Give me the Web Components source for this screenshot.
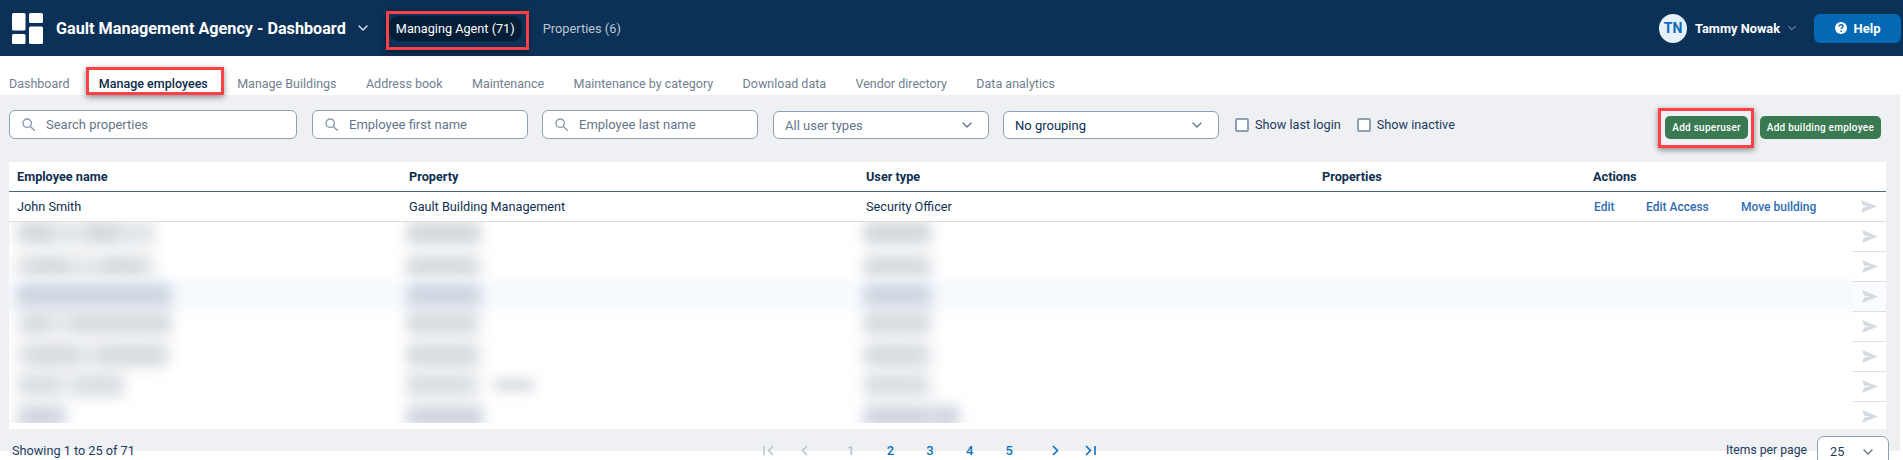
<!DOCTYPE html>
<html lang="en">
<head>
<meta charset="utf-8">
<title>Manage employees</title>
<style>
  html, body { margin: 0; padding: 0; background: #fff; }
  body { width: 1903px; height: 460px; overflow: hidden; font-family: Roboto, "Liberation Sans", sans-serif; font-size: 14px; color: #0b2f52; }
</style>
</head>
<body>
<app-header></app-header>
<nav-tabs></nav-tabs>
<main-panel>
  <filter-bar></filter-bar>
  <employee-table></employee-table>
</main-panel>
<table-footer></table-footer>

<script>
const chevron = (size, color, width) => `<svg width="${size}" height="${size}" viewBox="0 0 12 12" fill="none" stroke="${color}" stroke-width="${width}" stroke-linecap="round" stroke-linejoin="round"><path d="M2 4l4 4 4-4"/></svg>`;

// annotation frame that sits over its slotted content
class RedMark extends HTMLElement {
    connectedCallback() {
        this.attachShadow({ mode: 'open' });
        this.shadowRoot.innerHTML = `
            <style>
                :host { display: block; position: relative; }
                .frame {
                    position: absolute;
                    top: var(--t); right: var(--r); bottom: var(--b); left: var(--l);
                    border: 3px solid #fb4146;
                    box-shadow: 0 2px 6px rgba(0, 0, 0, 0.45);
                    pointer-events: none;
                }
            </style>
            <slot></slot>
            <div class="frame"></div>
        `;
    }
}
customElements.define('red-mark', RedMark);

class AppHeader extends HTMLElement {
    connectedCallback() {
        this.attachShadow({ mode: 'open' });
        this.shadowRoot.innerHTML = `
            <style>
                :host { display: flex; align-items: center; height: 56px; background: #0b3157; color: #fff; }
                .logo { margin-left: 12px; width: 31px; height: 31px; flex: none; }
                .title { margin-left: 13px; font-size: 16.2px; font-weight: 700; white-space: nowrap; }
                .caret { margin-left: 11px; display: flex; }
                .pill { height: 25px; width: 133px; box-sizing: border-box; display: flex; align-items: center; justify-content: center; background: #041e37; border-radius: 9px; font-size: 12.7px; font-weight: 400; white-space: nowrap; }
                red-mark { margin-left: 20px; --t: -5px; --r: -7px; --b: -9px; --l: -3px; }
                .other { margin-left: 21px; font-size: 12.8px; font-weight: 400; color: #bcc6d1; white-space: nowrap; }
                .user { margin-left: auto; display: flex; align-items: center; }
                .avatar { width: 28px; height: 29px; border-radius: 50%; background: #e6f0fa; color: #0a6bb8; font-size: 14px; font-weight: 700; display: flex; align-items: center; justify-content: center; }
                .name { margin-left: 8px; font-size: 12.8px; font-weight: 700; white-space: nowrap; }
                .user .caret { margin-left: 7px; }
                .help { margin-left: 17px; margin-right: 2px; width: 87px; height: 29px; border-radius: 6px; background: #0468b4; display: flex; align-items: center; justify-content: center; gap: 7px; font-size: 13px; font-weight: 700; }
            </style>
            <svg class="logo" viewBox="0 0 31 31" fill="#fff">
                <rect x="0" y="0" width="13.5" height="17.5" rx="1.5"/>
                <rect x="0" y="21" width="13.5" height="10" rx="1.5"/>
                <rect x="17" y="0" width="14" height="10" rx="1.5"/>
                <rect x="17" y="13.5" width="14" height="17.5" rx="1.5"/>
            </svg>
            <span class="title">Gault Management Agency - Dashboard</span>
            <span class="caret">${chevron(12, '#dfe5ec', 1.4)}</span>
            <red-mark><div class="pill">Managing Agent (71)</div></red-mark>
            <span class="other">Properties (6)</span>
            <div class="user">
                <div class="avatar">TN</div>
                <span class="name">Tammy Nowak</span>
                <span class="caret">${chevron(10, '#aab7c5', 1.1)}</span>
                <div class="help">
                    <svg width="12" height="12" viewBox="0 0 12 12">
                        <circle cx="6" cy="6" r="6" fill="#fff"/>
                        <path d="M4 4.6c0-1.2.9-1.9 2-1.9s2 .7 2 1.7c0 1.4-1.9 1.4-1.9 2.7" fill="none" stroke="#0468b4" stroke-width="1.4"/>
                        <circle cx="6.1" cy="9.1" r=".9" fill="#0468b4"/>
                    </svg>
                    Help
                </div>
            </div>
        `;
    }
}
customElements.define('app-header', AppHeader);

class NavTabs extends HTMLElement {
    connectedCallback() {
        this.attachShadow({ mode: 'open' });
        const tabs = ['Dashboard', 'Manage employees', 'Manage Buildings', 'Address book', 'Maintenance', 'Maintenance by category', 'Download data', 'Vendor directory', 'Data analytics'];
        this.shadowRoot.innerHTML = `
            <style>
                :host { display: flex; height: 39px; background: #fff; padding-left: 9px; gap: 29.4px; align-items: center; padding-top: 15px; box-sizing: border-box; font-size: 12.5px; color: #71808f; }
                span { white-space: nowrap; display: block; }
                .active { color: #0f2c4b; font-weight: 500; }
                red-mark { --t: -9px; --r: -16px; --b: -4px; --l: -13px; }
            </style>
            ${tabs.map(t => t === 'Manage employees'
                ? `<red-mark><span class="active">${t}</span></red-mark>`
                : `<span>${t}</span>`).join('')}
        `;
    }
}
customElements.define('nav-tabs', NavTabs);

class MainPanel extends HTMLElement {
    connectedCallback() {
        this.attachShadow({ mode: 'open' });
        this.shadowRoot.innerHTML = `
            <style>
                :host { display: block; height: 334px; margin-right: 3px; padding: 15px 14px 0 9px; box-sizing: border-box; background: #eff0f4; }
            </style>
            <slot></slot>
        `;
    }
}
customElements.define('main-panel', MainPanel);

class SearchInput extends HTMLElement {
    connectedCallback() {
        this.attachShadow({ mode: 'open' });
        this.shadowRoot.innerHTML = `
            <style>
                :host { display: flex; align-items: center; box-sizing: border-box; height: 29px; background: #fff; border: 1px solid #8fa0b2; border-radius: 6px; padding-left: 12px; gap: 11px; font-size: 13px; color: #64768a; white-space: nowrap; }
            </style>
            <svg width="13" height="13" viewBox="0 0 13 13" fill="none" stroke="#8c9cad" stroke-width="1.4" stroke-linecap="round">
                <circle cx="5.2" cy="5.2" r="4.2"/><path d="M8.4 8.4l3.9 3.9"/>
            </svg>
            <slot></slot>
        `;
    }
}
customElements.define('search-input', SearchInput);

class SelectBox extends HTMLElement {
    connectedCallback() {
        this.attachShadow({ mode: 'open' });
        this.shadowRoot.innerHTML = `
            <style>
                :host { display: flex; align-items: center; justify-content: space-between; box-sizing: border-box; height: 28px; margin-top: 1px; background: #fff; border: 1px solid #8fa0b2; border-radius: 6px; padding: 0 15px 0 11px; font-size: 13px; white-space: nowrap; }
            </style>
            <slot></slot>
            ${chevron(12, '#64768a', 1.4)}
        `;
    }
}
customElements.define('select-box', SelectBox);

class CheckBox extends HTMLElement {
    connectedCallback() {
        this.attachShadow({ mode: 'open' });
        this.shadowRoot.innerHTML = `
            <style>
                :host { display: flex; align-items: center; gap: 6px; font-size: 12.7px; color: #1b3b5c; white-space: nowrap; }
                i { display: block; width: 14px; height: 14px; box-sizing: border-box; border: 2px solid #8c9fb3; border-radius: 2px; background: #fff; }
            </style>
            <i></i><slot></slot>
        `;
    }
}
customElements.define('check-box', CheckBox);

class GreenButton extends HTMLElement {
    connectedCallback() {
        this.attachShadow({ mode: 'open' });
        this.shadowRoot.innerHTML = `
            <style>
                :host { display: flex; align-items: center; justify-content: center; box-sizing: border-box; height: 23px; padding: 0 7px; background: #3a7a52; color: #fff; border-radius: 5px; font-size: 10px; font-weight: 500; letter-spacing: .25px; white-space: nowrap; }
            </style>
            <slot></slot>
        `;
    }
}
customElements.define('green-button', GreenButton);

class FilterBar extends HTMLElement {
    connectedCallback() {
        this.attachShadow({ mode: 'open' });
        this.shadowRoot.innerHTML = `
            <style>
                :host { display: flex; align-items: center; height: 29px; }
                .wide { width: 288px; }
                .mid { width: 216px; }
                .ml15 { margin-left: 15px; }
                .ml14 { margin-left: 14px; }
                .chk1 { margin-left: 16px; }
                .chk2 { margin-left: 16px; }
                .muted { color: #64768a; }
                .btns { margin-left: auto; margin-right: 5px; display: flex; gap: 12px; margin-top: 5px; }
                red-mark { --t: -8px; --r: -6px; --b: -9px; --l: -7px; }
            </style>
            <search-input class="wide">Search properties</search-input>
            <search-input class="mid ml15">Employee first name</search-input>
            <search-input class="mid ml14">Employee last name</search-input>
            <select-box class="mid ml15"><span class="muted">All user types</span></select-box>
            <select-box class="mid ml14"><span>No grouping</span></select-box>
            <check-box class="chk1">Show last login</check-box>
            <check-box class="chk2">Show inactive</check-box>
            <div class="btns">
                <red-mark><green-button>Add superuser</green-button></red-mark>
                <green-button>Add building employee</green-button>
            </div>
        `;
    }
}
customElements.define('filter-bar', FilterBar);

const sendIcon = '<svg width="16" height="13" viewBox="0 0 16 13" fill="#d5dbe1"><path d="M0 0l16 6.5L0 13l2-5.4 6-1.1-6-1.1z"/></svg>';

class EmployeeTable extends HTMLElement {
    connectedCallback() {
        this.attachShadow({ mode: 'open' });
        // blurred rows: dark pieces as [x, width], wash = the lighter smear behind them, dy = vertical nudge
        const blurred = [
            { bars: [[14, 27], [79, 29], [401, 67], [858, 60]], wash: [[6, 140], [398, 74], [855, 68]], dy: -4, color: '#d3d8dc' },
            { bars: [[21, 37], [94, 37], [401, 64], [858, 58]], wash: [[6, 140], [398, 74], [855, 68]], dy: 0, color: '#d6dade' },
            { bars: [[11, 147], [401, 66], [858, 60]], wash: [[8, 155], [398, 74], [855, 68]], dy: -2, color: '#ccd5df' },
            { bars: [[18, 20], [64, 94], [401, 62], [858, 58]], wash: [[8, 155], [398, 74], [855, 68]], dy: -4, color: '#d6dadf' },
            { bars: [[21, 47], [91, 63], [401, 64], [858, 56]], wash: [[8, 152], [398, 74], [855, 68]], dy: -2, color: '#d6dadf' },
            { bars: [[14, 34], [68, 43], [401, 60], [858, 56], [485, 40]], wash: [[8, 108], [398, 74], [855, 68]], dy: -2, color: '#dadee2' },
            { bars: [[14, 37], [401, 70], [858, 62], [925, 22]], wash: [[8, 50], [398, 76], [855, 95]], dy: 0, color: '#cfd5df' }
        ];
        const box = (x, w, cls, color, dy) => `<div class="${cls}" style="left:${x}px;width:${w}px;background:${color};margin-top:${dy}px"></div>`;
        this.shadowRoot.innerHTML = `
            <style>
                :host { display: block; margin-top: 23px; background: #fff; font-size: 12.7px; color: #0f2f52; }
                .cols { display: grid; grid-template-columns: 392px 457px 456px 271px 1fr; padding-left: 8px; }
                .head { height: 29px; align-items: center; border-bottom: 1px solid #4f6375; font-weight: 700; }
                .row { height: 29px; align-items: center; border-bottom: 1px solid #d9dde1; }
                .actions { display: flex; align-items: center; color: #2f6cb2; font-weight: 500; font-size: 12px; padding-left: 1px; }
                .actions a:nth-child(1) { width: 52px; }
                .actions a:nth-child(2) { width: 95px; }
                .actions a:nth-child(3) { width: 120px; }
                .actions svg { display: block; flex: none; }
                .body { display: flex; height: 207px; }
                .pane { flex: 1; height: 201px; overflow: hidden; position: relative; }
                .band { height: 30px; position: relative; }
                .band.tint::before { content: ''; position: absolute; left: -20px; right: -20px; top: 0; bottom: 0; margin-top: -4px; background: #f6fafe; filter: blur(5px); }
                .wash { position: absolute; top: 2px; height: 26px; filter: blur(7px); opacity: .65; }
                .bar { position: absolute; top: 8px; height: 14px; filter: blur(6px); }
                .icons { width: 33px; flex: none; height: 207px; overflow: hidden; }
                .icons div { height: 29px; border-bottom: 1px solid #dce0e5; display: flex; align-items: center; justify-content: center; }
                .icons div:nth-child(3) { background: #f9fbfe; }
                .icons div:last-child { border-bottom: 0; }
            </style>
            <div class="cols head">
                <span>Employee name</span><span>Property</span><span>User type</span><span>Properties</span><span>Actions</span>
            </div>
            <div class="cols row">
                <span>John Smith</span><span>Gault Building Management</span><span>Security Officer</span><span></span>
                <div class="actions"><a>Edit</a><a>Edit Access</a><a>Move building</a>${sendIcon}</div>
            </div>
            <div class="body">
                <div class="pane">
                    ${blurred.map((r, i) => `
                        <div class="band ${i === 2 ? 'tint' : ''}">
                            ${r.wash.map(n => box(n[0], n[1], 'wash', r.color, r.dy)).join('')}
                            ${r.bars.map(n => box(n[0], n[1], 'bar', r.color, r.dy)).join('')}
                        </div>
                    `).join('')}
                </div>
                <div class="icons">
                    ${blurred.map(() => `<div>${sendIcon}</div>`).join('')}
                </div>
            </div>
        `;
    }
}
customElements.define('employee-table', EmployeeTable);

class TableFooter extends HTMLElement {
    connectedCallback() {
        this.attachShadow({ mode: 'open' });
        this.shadowRoot.innerHTML = `
            <style>
                :host { display: flex; align-items: flex-start; height: 31px; margin-right: 3px; padding: 14px 11px 0 12px; box-sizing: border-box; font-size: 12.7px; color: #1b3b5c; background: linear-gradient(#eff0f4 22px, #fff 22px); }
                .count { width: 751px; white-space: nowrap; }
                .pages { display: flex; align-items: center; height: 15px; font-weight: 500; color: #0f70bd; font-size: 13px; }
                .pages span { width: 39.6px; text-align: center; }
                .pages svg { display: block; }
                .off { color: #b6c2cd; }
                .per { margin-left: auto; display: flex; gap: 10px; align-items: flex-start; white-space: nowrap; }
                .per-label { font-size: 12.2px; }
                .per-box { box-sizing: border-box; width: 72px; height: 40px; margin-top: -7px; padding: 7px 14px 0 12px; background: #fff; border: 1px solid #8fa0b2; border-radius: 7px; display: flex; justify-content: space-between; }
                .per-box svg { margin-top: 2px; }
            </style>
            <span class="count">Showing 1 to 25 of 71</span>
            <div class="pages">
                <svg width="11" height="11" viewBox="0 0 11 11" fill="none" stroke="#b6c2cd" stroke-width="1.5"><path d="M1 1v9M10 1L5.5 5.5 10 10"/></svg>
                <svg style="margin-left:26px" width="9" height="11" viewBox="0 0 9 11" fill="none" stroke="#b6c2cd" stroke-width="1.5"><path d="M7 1L2.5 5.5 7 10"/></svg>
                <span class="off" style="margin-left:22px">1</span><span>2</span><span>3</span><span>4</span><span>5</span>
                <svg style="margin-left:22px" width="9" height="11" viewBox="0 0 9 11" fill="none" stroke="#0f70bd" stroke-width="1.6"><path d="M2 1l4.5 4.5L2 10"/></svg>
                <svg style="margin-left:25px" width="11" height="11" viewBox="0 0 11 11" fill="none" stroke="#0f70bd" stroke-width="1.6"><path d="M1 1l4.5 4.5L1 10M10 1v9"/></svg>
            </div>
            <div class="per">
                <span class="per-label">Items per page</span>
                <div class="per-box"><span>25</span>${chevron(12, '#64768a', 1.4)}</div>
            </div>
        `;
    }
}
customElements.define('table-footer', TableFooter);
</script>
</body>
</html>
